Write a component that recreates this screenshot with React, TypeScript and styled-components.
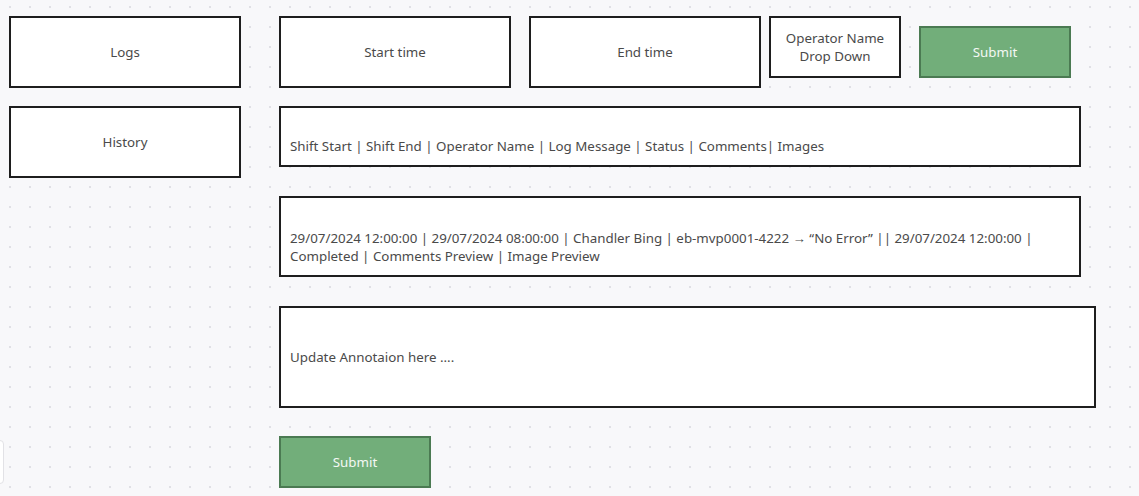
import styled, { createGlobalStyle } from "styled-components";

const GlobalStyle = createGlobalStyle`
  html, body {
    margin: 0;
    padding: 0;
    background: #f8f8fa;
  }
  body {
    font-family: "Noto Sans", "Open Sans", sans-serif;
    font-size: 13.33px;
    color: #4a4a4a;
  }
`;

const Canvas = styled.div`
  position: relative;
  width: 1139px;
  height: 496px;
  box-sizing: border-box;
  overflow: hidden;
  padding: 16px 0 0 9px;
  background-color: #f8f8fa;
  background-image: radial-gradient(circle, #e0e0e5 1px, transparent 1.3px);
  background-size: 20px 20px;
  background-position: 0px -3px;
  display: flex;
  gap: 38px;
`;

const SideNav = styled.div`
  display: flex;
  flex-direction: column;
  gap: 18px;
`;

const Box = styled.div<{ $w: number; $h: number; $align?: "center" | "bottom" | "middle" }>`
  box-sizing: border-box;
  width: ${p => p.$w}px;
  height: ${p => p.$h}px;
  background: #fff;
  border: 2px solid #1e1e1e;
  display: flex;
  align-items: ${p => (p.$align === "bottom" ? "flex-end" : "center")};
  justify-content: ${p => (p.$align === "center" ? "center" : "flex-start")};
  text-align: ${p => (p.$align === "center" ? "center" : "left")};
  padding: ${p => (p.$align === "center" ? "0 6px" : "0 10px 10px 9px")};
  line-height: 18px;
`;

const Main = styled.div`
  display: flex;
  flex-direction: column;
`;

const Toolbar = styled.div`
  display: flex;
  align-items: flex-start;
  margin-bottom: 18px;
`;

const Button = styled.button<{ $w: number }>`
  box-sizing: border-box;
  width: ${p => p.$w}px;
  height: 52px;
  background: #72ae7a;
  border: 2px solid #4b7a52;
  color: #f4f8f4;
  font-family: "Noto Sans", "Open Sans", sans-serif;
  font-size: 13.33px;
  line-height: 18px;
  padding: 0;
`;

const Text = styled.span`
  display: block;
`;

const EdgeTab = styled.div`
  position: absolute;
  left: -6px;
  top: 440px;
  width: 8px;
  height: 42px;
  background: #fff;
  border: 1px solid #e2e2e6;
  border-radius: 4px;
`;

export default function App() {
  return (
    <>
      <GlobalStyle />
      <Canvas>
        <SideNav>
          <Box $w={232} $h={72} $align="center">Logs</Box>
          <Box $w={232} $h={72} $align="center">History</Box>
        </SideNav>
        <Main>
          <Toolbar>
            <Box $w={232} $h={72} $align="center">Start time</Box>
            <Box $w={232} $h={72} $align="center" style={{ marginLeft: 18 }}>End time</Box>
            <Box $w={132} $h={62} $align="center" style={{ marginLeft: 8 }}>
              <Text>Operator Name<br />Drop Down</Text>
            </Box>
            <Button $w={152} style={{ marginLeft: 18, marginTop: 10 }}>Submit</Button>
          </Toolbar>
          <Box $w={802} $h={61} $align="bottom">
            <Text>Shift Start | Shift End | Operator Name | Log Message | Status | Comments| Images</Text>
          </Box>
          <Box $w={802} $h={81} $align="bottom" style={{ marginTop: 29 }}>
            <Text>
              29/07/2024 12:00:00 | 29/07/2024 08:00:00 | Chandler Bing | eb-mvp0001-4222 → “No Error” || 29/07/2024 12:00:00 | Completed | Comments Preview | Image Preview
            </Text>
          </Box>
          <Box $w={817} $h={102} $align="middle" style={{ marginTop: 29, paddingBottom: 0 }}>
            <Text>Update Annotaion here ....</Text>
          </Box>
          <Button $w={152} style={{ marginTop: 28 }}>Submit</Button>
        </Main>
        <EdgeTab />
      </Canvas>
    </>
  );
}
